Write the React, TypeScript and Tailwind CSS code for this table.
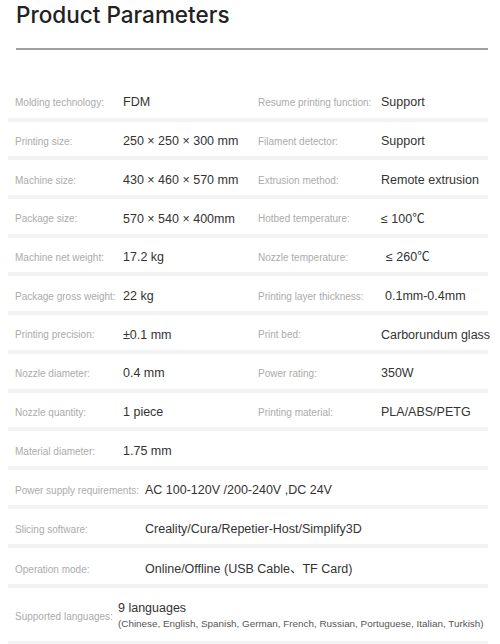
import React from 'react';

type Pair = { label: string; value: string; valueClass?: string };

const leftRows: Pair[] = [
    { label: 'Molding technology:', value: 'FDM' },
    { label: 'Printing size:', value: '250 × 250 × 300 mm' },
    { label: 'Machine size:', value: '430 × 460 × 570 mm' },
    { label: 'Package size:', value: '570 × 540 × 400mm' },
    { label: 'Machine net weight:', value: '17.2 kg' },
    { label: 'Package gross weight:', value: '22 kg' },
    { label: 'Printing precision:', value: '±0.1 mm' },
    { label: 'Nozzle diameter:', value: '0.4 mm' },
    { label: 'Nozzle quantity:', value: '1 piece' },
    { label: 'Material diameter:', value: '1.75 mm' },
];

const rightRows: (Pair | null)[] = [
    { label: 'Resume printing function:', value: 'Support' },
    { label: 'Filament detector:', value: 'Support' },
    { label: 'Extrusion method:', value: 'Remote extrusion' },
    { label: 'Hotbed temperature:', value: '≤ 100℃' },
    { label: 'Nozzle temperature:', value: '≤ 260℃', valueClass: 'pl-[5px]' },
    { label: 'Printing layer thickness:', value: '0.1mm-0.4mm', valueClass: 'pl-[4px]' },
    { label: 'Print bed:', value: 'Carborundum glass' },
    { label: 'Power rating:', value: '350W' },
    { label: 'Printing material:', value: 'PLA/ABS/PETG' },
    null,
];

const wideRows: Pair[] = [
    { label: 'Power supply requirements:', value: 'AC 100-120V /200-240V ,DC 24V' },
    { label: 'Slicing software:', value: 'Creality/Cura/Repetier-Host/Simplify3D' },
    { label: 'Operation mode:', value: 'Online/Offline (USB Cable、TF Card)' },
];

const Separator = () => <div className="h-[4px] bg-[#f3f3f3]" />;

const Cell = ({ item, labelWidth, pad }: { item: Pair | null; labelWidth: string; pad: string }) => (
    <div className={`flex items-center h-[34.7px] pt-[5px] ${pad}`}>
        {item && (
            <>
                <span className={`${labelWidth} shrink-0 text-[10px] text-[#ababab] whitespace-nowrap`}>{item.label}</span>
                <span className={`text-[12.5px] text-[#333] whitespace-nowrap ${item.valueClass ?? ''}`}>{item.value}</span>
            </>
        )}
    </div>
);

export default function App() {
    return (
        <div
            className="w-[500px] h-[644px] bg-white overflow-hidden"
            style={{ fontFamily: '"Liberation Sans", "Noto Sans CJK SC", sans-serif' }}
        >
            <h1
                className="pl-[16px] pt-[2px] text-[22.5px] leading-[26px] font-medium text-[#222]"
                style={{ fontFamily: 'Inter, "Liberation Sans", sans-serif' }}
            >
                Product Parameters
            </h1>
            <div className="ml-[16px] mt-[20px] w-[472px] h-[2px] bg-[#a0a0a0]" />

            <div className="ml-[8px] w-[480px] mt-[33px]">
                {leftRows.map((l, i) => (
                    <div key={l.label}>
                        <div className="grid grid-cols-[243px_237px]">
                            <Cell item={l} labelWidth="w-[108px]" pad="pl-[7px]" />
                            <Cell item={rightRows[i]} labelWidth="w-[123px]" pad="pl-[7px]" />
                        </div>
                        <Separator />
                    </div>
                ))}

                {wideRows.map((r) => (
                    <div key={r.label}>
                        <div className="flex items-center h-[35.3px] pt-[6px] pl-[7px]">
                            <span className="w-[130px] shrink-0 text-[10px] text-[#ababab] whitespace-nowrap">{r.label}</span>
                            <span className="text-[12.5px] text-[#333] whitespace-nowrap">{r.value}</span>
                        </div>
                        <Separator />
                    </div>
                ))}

                <div className="flex items-center h-[53px] pt-[4px] pl-[7px]">
                    <span className="w-[103px] shrink-0 text-[10px] text-[#ababab] whitespace-nowrap">Supported languages:</span>
                    <div className="flex flex-col">
                        <span className="text-[12.5px] leading-[16px] text-[#333]">9 languages</span>
                        <span className="text-[9.9px] leading-[16px] text-[#555] whitespace-nowrap">
                            (Chinese, English, Spanish, German, French, Russian, Portuguese, Italian, Turkish)
                        </span>
                    </div>
                </div>
                <Separator />
            </div>
        </div>
    );
}
